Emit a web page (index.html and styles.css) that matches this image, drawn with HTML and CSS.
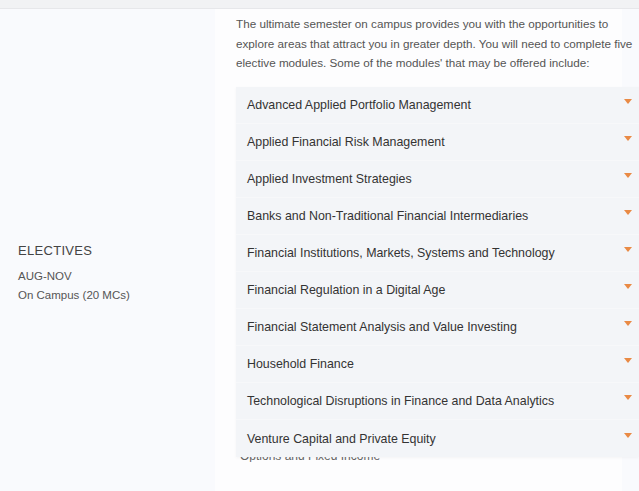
FILE: index.html
```html
<!DOCTYPE html>
<html>
<head>
<meta charset="utf-8">
<link rel="stylesheet" href="styles.css">
</head>
<body>
<div class="topbar"></div>
<div class="main">
  <div class="side">
    <div class="side-title">ELECTIVES</div>
    <div class="side-line">AUG-NOV</div>
    <div class="side-line">On Campus (20 MCs)</div>
  </div>
  <div class="content">
    <p class="intro">The ultimate semester on campus provides you with the opportunities to explore areas that attract you in greater depth. You will need to complete five elective modules. Some of the modules' that may be offered include:</p>
    <div class="panel">
      <div class="row"><span>Advanced Applied Portfolio Management</span><i class="arrow"></i></div>
      <div class="row"><span>Applied Financial Risk Management</span><i class="arrow"></i></div>
      <div class="row"><span>Applied Investment Strategies</span><i class="arrow"></i></div>
      <div class="row"><span>Banks and Non-Traditional Financial Intermediaries</span><i class="arrow"></i></div>
      <div class="row"><span>Financial Institutions, Markets, Systems and Technology</span><i class="arrow"></i></div>
      <div class="row"><span>Financial Regulation in a Digital Age</span><i class="arrow"></i></div>
      <div class="row"><span>Financial Statement Analysis and Value Investing</span><i class="arrow"></i></div>
      <div class="row"><span>Household Finance</span><i class="arrow"></i></div>
      <div class="row"><span>Technological Disruptions in Finance and Data Analytics</span><i class="arrow"></i></div>
      <div class="row"><span>Venture Capital and Private Equity</span><i class="arrow"></i></div>
    </div>
    <div class="clipped"><span>Options and Fixed Income</span></div>
  </div>
</div>
</body>
</html>
```
FILE: styles.css
```css
html, body {
  margin: 0;
  padding: 0;
  background: #f9fafd;
  font-family: "Liberation Sans", Arial, sans-serif;
  overflow: hidden;
}
.topbar {
  height: 8px;
  background: #f1f2f4;
  border-bottom: 1px solid #e6e7ea;
}
.main {
  display: flex;
  height: 482px;
}
.side {
  width: 215px;
  padding-left: 18px;
  padding-top: 48px;
  box-sizing: border-box;
  display: flex;
  flex-direction: column;
  justify-content: center;
}
.side-title {
  font-size: 13px;
  color: #444;
  letter-spacing: 0.3px;
  margin-bottom: 9px;
}
.side-line {
  font-size: 11.5px;
  color: #555;
  line-height: 19px;
}
.content {
  width: 407px;
  background: #fdfdfe;
  padding-left: 21px;
  box-sizing: border-box;
}
.intro {
  margin: 5px 0 0 0;
  font-size: 11.7px;
  line-height: 19.5px;
  color: #555;
  width: 405px;
}
.panel {
  margin-top: 14px;
  width: 403px;
  background: #f3f5f8;
  box-shadow: 0 1px 3px rgba(0,0,0,0.04);
  position: relative;
  z-index: 1;
}
.row {
  height: 37px;
  display: flex;
  align-items: center;
  justify-content: space-between;
  padding: 0 7px 0 11px;
  border-bottom: 1px solid #f7f8fa;
  box-sizing: border-box;
  font-size: 12.4px;
  color: #333;
}
.row:last-child { border-bottom: none; }
.row span { margin-top: 1px; }
.arrow {
  width: 0;
  height: 0;
  border-left: 4px solid transparent;
  border-right: 4px solid transparent;
  border-top: 5px solid #e98a45;
  margin-bottom: 6px;
}
.clipped {
  height: 5px;
  overflow: hidden;
  display: flex;
  align-items: flex-end;
  padding-left: 4px;
}
.clipped span {
  font-size: 12px;
  line-height: 12px;
  color: #666;
  display: block;
}
```
